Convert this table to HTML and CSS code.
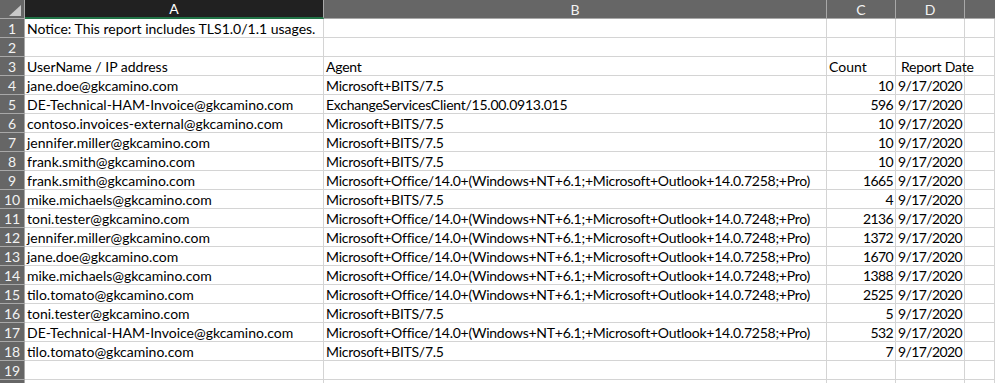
FILE: index.html
```html
<!DOCTYPE html>
<html>
<head>
<meta charset="utf-8">
<link rel="stylesheet" href="styles.css">
</head>
<body>
<div class="sheet">
  <div class="corner"><svg width="24" height="18" viewBox="0 0 24 18"><polygon points="21,5 21,16 9,16" fill="#c9c9c9"/></svg></div>
  <div class="ch ch-sel">A</div>
  <div class="ch">B</div>
  <div class="ch">C</div>
  <div class="ch">D</div>
  <div class="ch ch-last"></div>

  <div class="rh">1</div><div class="c">Notice: This report includes TLS1.0/1.1 usages.</div><div class="c"></div><div class="c"></div><div class="c"></div><div class="c"></div>
  <div class="rh">2</div><div class="c"></div><div class="c"></div><div class="c"></div><div class="c"></div><div class="c"></div>
  <div class="rh">3</div><div class="c">UserName / IP address</div><div class="c b">Agent</div><div class="c">Count</div><div class="c d">Report Date</div><div class="c"></div>
  <div class="rh">4</div><div class="c">jane.doe@gkcamino.com</div><div class="c b">Microsoft+BITS/7.5</div><div class="c n">10</div><div class="c n">9/17/2020</div><div class="c"></div>
  <div class="rh">5</div><div class="c">DE-Technical-HAM-Invoice@gkcamino.com</div><div class="c b">ExchangeServicesClient/15.00.0913.015</div><div class="c n">596</div><div class="c n">9/17/2020</div><div class="c"></div>
  <div class="rh">6</div><div class="c">contoso.invoices-external@gkcamino.com</div><div class="c b">Microsoft+BITS/7.5</div><div class="c n">10</div><div class="c n">9/17/2020</div><div class="c"></div>
  <div class="rh">7</div><div class="c">jennifer.miller@gkcamino.com</div><div class="c b">Microsoft+BITS/7.5</div><div class="c n">10</div><div class="c n">9/17/2020</div><div class="c"></div>
  <div class="rh">8</div><div class="c">frank.smith@gkcamino.com</div><div class="c b">Microsoft+BITS/7.5</div><div class="c n">10</div><div class="c n">9/17/2020</div><div class="c"></div>
  <div class="rh">9</div><div class="c">frank.smith@gkcamino.com</div><div class="c b">Microsoft+Office/14.0+(Windows+NT+6.1;+Microsoft+Outlook+14.0.7258;+Pro)</div><div class="c n">1665</div><div class="c n">9/17/2020</div><div class="c"></div>
  <div class="rh">10</div><div class="c">mike.michaels@gkcamino.com</div><div class="c b">Microsoft+BITS/7.5</div><div class="c n">4</div><div class="c n">9/17/2020</div><div class="c"></div>
  <div class="rh">11</div><div class="c">toni.tester@gkcamino.com</div><div class="c b">Microsoft+Office/14.0+(Windows+NT+6.1;+Microsoft+Outlook+14.0.7248;+Pro)</div><div class="c n">2136</div><div class="c n">9/17/2020</div><div class="c"></div>
  <div class="rh">12</div><div class="c">jennifer.miller@gkcamino.com</div><div class="c b">Microsoft+Office/14.0+(Windows+NT+6.1;+Microsoft+Outlook+14.0.7248;+Pro)</div><div class="c n">1372</div><div class="c n">9/17/2020</div><div class="c"></div>
  <div class="rh">13</div><div class="c">jane.doe@gkcamino.com</div><div class="c b">Microsoft+Office/14.0+(Windows+NT+6.1;+Microsoft+Outlook+14.0.7258;+Pro)</div><div class="c n">1670</div><div class="c n">9/17/2020</div><div class="c"></div>
  <div class="rh">14</div><div class="c">mike.michaels@gkcamino.com</div><div class="c b">Microsoft+Office/14.0+(Windows+NT+6.1;+Microsoft+Outlook+14.0.7248;+Pro)</div><div class="c n">1388</div><div class="c n">9/17/2020</div><div class="c"></div>
  <div class="rh">15</div><div class="c">tilo.tomato@gkcamino.com</div><div class="c b">Microsoft+Office/14.0+(Windows+NT+6.1;+Microsoft+Outlook+14.0.7248;+Pro)</div><div class="c n">2525</div><div class="c n">9/17/2020</div><div class="c"></div>
  <div class="rh">16</div><div class="c">toni.tester@gkcamino.com</div><div class="c b">Microsoft+BITS/7.5</div><div class="c n">5</div><div class="c n">9/17/2020</div><div class="c"></div>
  <div class="rh">17</div><div class="c">DE-Technical-HAM-Invoice@gkcamino.com</div><div class="c b">Microsoft+Office/14.0+(Windows+NT+6.1;+Microsoft+Outlook+14.0.7258;+Pro)</div><div class="c n">532</div><div class="c n">9/17/2020</div><div class="c"></div>
  <div class="rh">18</div><div class="c">tilo.tomato@gkcamino.com</div><div class="c b">Microsoft+BITS/7.5</div><div class="c n">7</div><div class="c n">9/17/2020</div><div class="c"></div>
  <div class="rh">19</div><div class="c"></div><div class="c"></div><div class="c"></div><div class="c"></div><div class="c"></div>
  <div class="rh"></div><div class="c"></div><div class="c"></div><div class="c"></div><div class="c"></div><div class="c"></div>
</div>
</body>
</html>
```
FILE: styles.css
```css
html, body {
  margin: 0;
  padding: 0;
  background: #ffffff;
  overflow: hidden;
}
.sheet {
  display: grid;
  grid-template-columns: 25px 299px 503px 69px 69px 1fr;
  grid-auto-rows: 19px;
  width: 995px;
  font-family: Lato, "Liberation Sans", sans-serif;
  font-size: 14px;
  color: #000;
}
.corner {
  background: #666666;
  border-right: 1px solid #a8a8a8;
  border-bottom: 1px solid #a8a8a8;
  box-sizing: border-box;
  overflow: hidden;
}
.corner svg { display: block; }
.ch {
  background: #666666;
  color: #f2f2f2;
  border-right: 1px solid #a8a8a8;
  border-bottom: 1px solid #a8a8a8;
  box-sizing: border-box;
  display: flex;
  align-items: center;
  justify-content: center;
  font-size: 14px;
  line-height: 1;
  padding-top: 1px;
}
.ch-sel {
  background: #212121;
  border-bottom: 2px solid #217346;
  color: #ffffff;
}
.ch-last { border-right: none; }
.rh {
  background: #666666;
  color: #f2f2f2;
  border-right: 1px solid #a8a8a8;
  border-bottom: 1px solid #a8a8a8;
  box-sizing: border-box;
  display: flex;
  align-items: flex-end;
  justify-content: center;
  padding-bottom: 1px;
  line-height: 1;
}
.c {
  border-right: 1px solid #d4d4d4;
  border-bottom: 1px solid #d4d4d4;
  box-sizing: border-box;
  padding: 0 3px 1px 2px;
  white-space: nowrap;
  overflow: visible;
  display: flex;
  align-items: flex-end;
  line-height: 1;
}
.b { letter-spacing: -0.25px; }
.d { padding-left: 5px; letter-spacing: -0.2px; }
.n {
  justify-content: flex-end;
  letter-spacing: -0.6px;
  padding-right: 2px;
}
```
